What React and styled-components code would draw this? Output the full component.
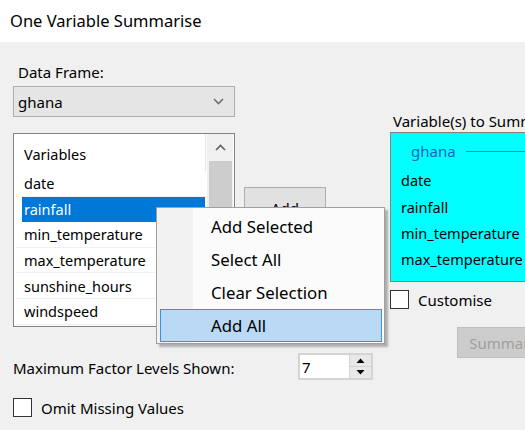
import React from "react";
import styled, { createGlobalStyle } from "styled-components";

const Global = createGlobalStyle`
  html, body { margin: 0; padding: 0; }
  body {
    width: 525px; height: 430px; overflow: hidden;
    background: #f0f0f0;
    font-family: "Noto Sans", "Open Sans", sans-serif;
    font-size: 15px; color: #000;
  }
`;

const Window = styled.div`
  width: 525px; height: 430px; overflow: hidden; position: relative;
  background: #f0f0f0;
`;

const TitleBar = styled.div`
  height: 42px; background: #fff; display: flex; align-items: center;
  padding-left: 10px; font-size: 16.5px; padding-bottom: 2px; box-sizing: border-box;
`;

const Form = styled.div`
  display: grid;
  grid-template-columns: 222px 155px 300px;
  grid-template-rows: auto auto auto;
  padding: 22px 0 0 13px;
  position: relative;
`;

const LeftCol = styled.div`
  grid-column: 1; grid-row: 1;
  display: flex; flex-direction: column;
`;

const Label = styled.div`
  height: 16px; line-height: 16px; padding-left: ${p => p.$indent || 0}px;
  white-space: nowrap;
`;

const Combo = styled.div`
  margin-top: 6px; height: 31px; box-sizing: border-box;
  background: #e5e5e5; border: 1px solid #adadad;
  display: flex; align-items: center; justify-content: space-between;
  padding: 0 10px 0 4px;
`;

const ListBox = styled.div`
  margin-top: 16px; height: 194px; box-sizing: border-box;
  background: #fff; border: 1px solid #828282;
  display: flex; position: relative; font-size: 14.5px;
`;

const ListBody = styled.div`
  flex: 1; display: flex; flex-direction: column; padding-left: 8px;
`;

const ListHeader = styled.div`
  height: 37px; display: flex; align-items: center; padding-left: 2px;
  padding-top: 2px; box-sizing: border-box;
  border-right: 1px solid #e5e5e5; margin-right: -1px;
`;

const ListItem = styled.div`
  height: 25.6px; display: flex; align-items: center;
  box-sizing: border-box;
  background: ${p => (p.$selected ? "#0078d7" : "transparent")};
  color: ${p => (p.$selected ? "#fff" : "#000")};
  border-bottom: 1px solid ${p => (p.$selected ? "#0078d7" : "#f0f0f0")};
  margin-right: ${p => (p.$selected ? "0" : "-8px")};
  margin-left: ${p => (p.$selected ? "0" : "-6px")};
  padding-left: ${p => (p.$selected ? "2px" : "8px")};
`;

const ScrollBar = styled.div`
  width: 26px; margin: 0 1px 0 2px; background: #f0f0f0;
  display: flex; flex-direction: column; align-items: center;
`;

const ScrollArrow = styled.div`
  height: 27px; width: 100%; display: flex; align-items: center; justify-content: center;
`;

const ScrollThumb = styled.div`
  width: 23px; height: 130px; background: #cdcdcd;
`;

const MiddleCol = styled.div`
  grid-column: 2; grid-row: 1;
`;

const Button = styled.div`
  box-sizing: border-box;
  width: ${p => p.$w}px; height: ${p => p.$h}px;
  margin-left: ${p => p.$ml || 0}px; margin-top: ${p => p.$mt || 0}px;
  background: ${p => (p.$disabled ? "#cccccc" : "#e1e1e1")};
  border: 1px solid ${p => (p.$disabled ? "#bfbfbf" : "#adadad")};
  color: ${p => (p.$disabled ? "#a0a0a0" : "#000")};
  display: flex; align-items: center; justify-content: center;
  white-space: nowrap; overflow: hidden;
`;

const RightCol = styled.div`
  grid-column: 3; grid-row: 1 / 4;
  display: flex; flex-direction: column;
`;

const SelBox = styled.div`
  margin-top: 3px; height: 150px; width: 220px; box-sizing: border-box;
  background: #00ffff; border: 1px solid #828282;
  display: flex; flex-direction: column; padding-left: 10px; font-size: 14.5px;
`;

const GroupHead = styled.div`
  height: 34px; display: flex; align-items: center; gap: 10px;
  padding-left: 10px; color: #1a5fc4; padding-top: 2px; box-sizing: border-box;
  font-size: 15px;
`;

const GroupLine = styled.div`
  flex: 1; height: 1px; background: #3a78c8;
`;

const SelItem = styled.div`
  height: 26.4px; display: flex; align-items: center;
`;

const CheckRow = styled.div`
  display: flex; align-items: center; gap: 9px;
  margin-top: ${p => p.$mt || 0}px; height: 19px;
`;

const CheckBox = styled.div`
  width: 19px; height: 19px; box-sizing: border-box;
  background: #fff; border: 1px solid #333;
`;

const FactorRow = styled.div`
  grid-column: 1 / 3; grid-row: 2;
  margin-top: 26px; display: flex; align-items: center; height: 27px;
`;

const FactorLabel = styled.div`
  width: 285px; padding-top: 3px; white-space: nowrap;
`;

const Spin = styled.div`
  width: 75px; height: 27px; box-sizing: border-box;
  background: #fff; border: 2px solid #d4d4d4;
  display: flex; align-items: stretch;
`;

const SpinText = styled.div`
  flex: 1; padding-left: 2px; display: flex; align-items: center;
`;

const SpinButtons = styled.div`
  width: 21px; display: flex; flex-direction: column; gap: 1px;
  border-left: 1px solid #d4d4d4; background: #d4d4d4;
`;

const SpinBtn = styled.div`
  flex: 1; background: #e8e8e8; display: flex; align-items: center; justify-content: center;
`;

const OmitRow = styled(CheckRow)`
  grid-column: 1 / 3; grid-row: 3;
`;

const Menu = styled.div`
  position: absolute; left: 156px; top: 207px;
  width: 229px; height: 137px; box-sizing: border-box;
  background: #fbfbfb; border: 1px solid #a0a0a0;
  box-shadow: 3px 3px 2px rgba(0,0,0,0.28);
  padding: 2px 2px 0 3px;
  display: flex; flex-direction: column;
  font-size: 16.8px;
  &::before {
    content: ""; position: absolute; left: 0; top: 0; bottom: 0; width: 36px;
    background: #f2f2f2;
  }
`;

const MenuItem = styled.div`
  position: relative; height: 33px; box-sizing: border-box;
  display: flex; align-items: center; padding-left: 50px;
  background: ${p => (p.$active ? "#b9d9f4" : "transparent")};
  border: 1px solid ${p => (p.$active ? "#3d8ee0" : "transparent")};
`;

const Chevron = ({ up }) => (
  <svg width="11" height="7" viewBox="0 0 11 7">
    <path d={up ? "M1 6 L5.5 1.5 L10 6" : "M1 1 L5.5 5.5 L10 1"} fill="none" stroke={up ? "#606060" : "#707070"} strokeWidth="1.6" />
  </svg>
);

const Tri = ({ up }) => (
  <svg width="9" height="5" viewBox="0 0 9 5">
    <path d={up ? "M0.5 5 L4.5 0.5 L8.5 5 Z" : "M0.5 0 L4.5 4.5 L8.5 0 Z"} fill="#000" />
  </svg>
);

const variables = ["date", "rainfall", "min_temperature", "max_temperature", "sunshine_hours", "windspeed"];
const selected = ["date", "rainfall", "min_temperature", "max_temperature"];
const menuItems = ["Add Selected", "Select All", "Clear Selection", "Add All"];

export default function App() {
  return (
    <Window>
      <Global />
      <TitleBar>One Variable Summarise</TitleBar>
      <Form>
        <LeftCol>
          <Label $indent={5}>Data Frame:</Label>
          <Combo>
            <span>ghana</span>
            <Chevron />
          </Combo>
          <ListBox>
            <ListBody>
              <ListHeader>Variables</ListHeader>
              {variables.map(v => (
                <ListItem key={v} $selected={v === "rainfall"}>{v}</ListItem>
              ))}
            </ListBody>
            <ScrollBar>
              <ScrollArrow><Chevron up /></ScrollArrow>
              <ScrollThumb />
            </ScrollBar>
          </ListBox>
        </LeftCol>
        <MiddleCol>
          <Button $w={82} $h={42} $ml={9} $mt={123}>Add</Button>
        </MiddleCol>
        <RightCol>
          <Label $indent={3} style={{ marginTop: 49 }}>Variable(s) to Summarise:</Label>
          <SelBox>
            <GroupHead>ghana<GroupLine /></GroupHead>
            {selected.map(v => <SelItem key={v}>{v}</SelItem>)}
          </SelBox>
          <CheckRow $mt={8}>
            <CheckBox />
            <span>Customise</span>
          </CheckRow>
          <Button $w={104} $h={31} $ml={67} $mt={18} $disabled>Summarise</Button>
        </RightCol>
        <FactorRow>
          <FactorLabel>Maximum Factor Levels Shown:</FactorLabel>
          <Spin>
            <SpinText>7</SpinText>
            <SpinButtons>
              <SpinBtn><Tri up /></SpinBtn>
              <SpinBtn><Tri /></SpinBtn>
            </SpinButtons>
          </Spin>
        </FactorRow>
        <OmitRow $mt={18}>
          <CheckBox />
          <span>Omit Missing Values</span>
        </OmitRow>
      </Form>
      <Menu>
        {menuItems.map(m => (
          <MenuItem key={m} $active={m === "Add All"}>{m}</MenuItem>
        ))}
      </Menu>
    </Window>
  );
}
